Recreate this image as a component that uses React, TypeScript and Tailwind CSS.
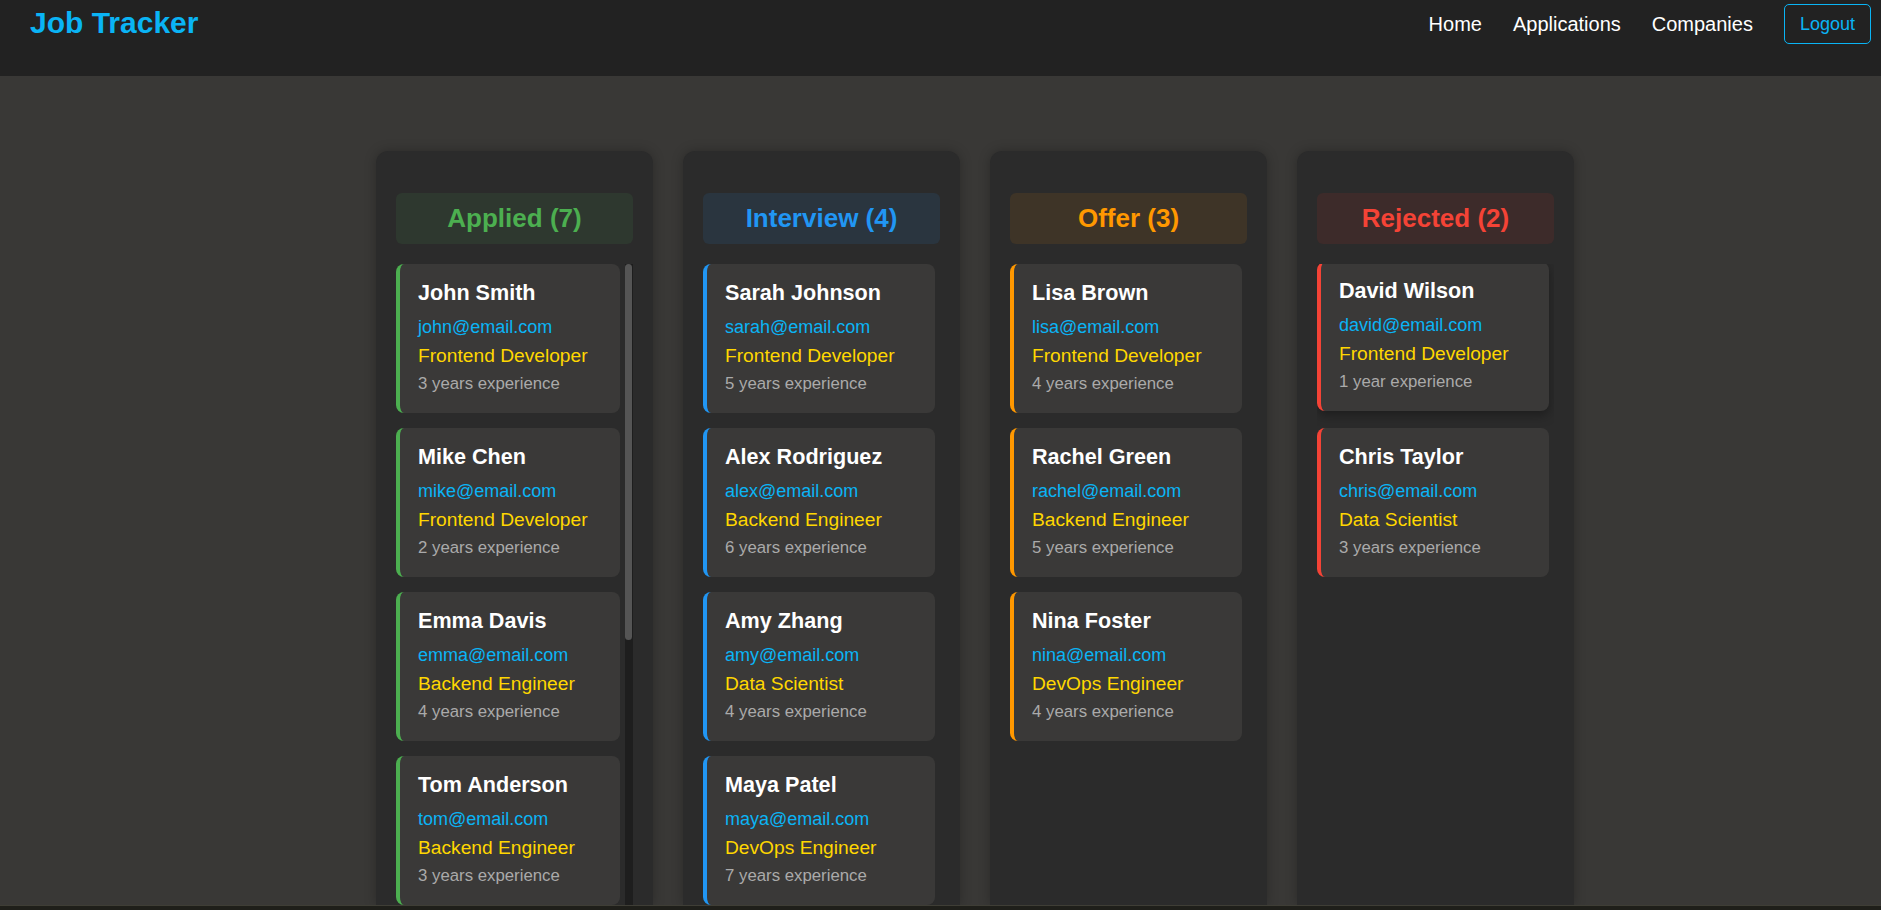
import React from 'react';

type Candidate = {
  name: string;
  email: string;
  role: string;
  exp: string;
};

type Column = {
  title: string;
  text: string;
  head: string;
  border: string;
  scroll?: boolean;
  items: Candidate[];
};

const columns: Column[] = [
  {
    title: 'Applied (7)',
    text: 'text-[#4caf50]',
    head: 'bg-[#2e382f]',
    border: 'border-[#4caf50]',
    scroll: true,
    items: [
      { name: 'John Smith', email: 'john@email.com', role: 'Frontend Developer', exp: '3 years experience' },
      { name: 'Mike Chen', email: 'mike@email.com', role: 'Frontend Developer', exp: '2 years experience' },
      { name: 'Emma Davis', email: 'emma@email.com', role: 'Backend Engineer', exp: '4 years experience' },
      { name: 'Tom Anderson', email: 'tom@email.com', role: 'Backend Engineer', exp: '3 years experience' },
      { name: 'Olivia Martin', email: 'olivia@email.com', role: 'Data Scientist', exp: '2 years experience' },
      { name: 'James Lee', email: 'james@email.com', role: 'DevOps Engineer', exp: '5 years experience' },
      { name: 'Sophie Clark', email: 'sophie@email.com', role: 'Frontend Developer', exp: '1 year experience' },
    ],
  },
  {
    title: 'Interview (4)',
    text: 'text-[#2196f3]',
    head: 'bg-[#2a353f]',
    border: 'border-[#2196f3]',
    items: [
      { name: 'Sarah Johnson', email: 'sarah@email.com', role: 'Frontend Developer', exp: '5 years experience' },
      { name: 'Alex Rodriguez', email: 'alex@email.com', role: 'Backend Engineer', exp: '6 years experience' },
      { name: 'Amy Zhang', email: 'amy@email.com', role: 'Data Scientist', exp: '4 years experience' },
      { name: 'Maya Patel', email: 'maya@email.com', role: 'DevOps Engineer', exp: '7 years experience' },
    ],
  },
  {
    title: 'Offer (3)',
    text: 'text-[#ff9800]',
    head: 'bg-[#3e3427]',
    border: 'border-[#ff9800]',
    items: [
      { name: 'Lisa Brown', email: 'lisa@email.com', role: 'Frontend Developer', exp: '4 years experience' },
      { name: 'Rachel Green', email: 'rachel@email.com', role: 'Backend Engineer', exp: '5 years experience' },
      { name: 'Nina Foster', email: 'nina@email.com', role: 'DevOps Engineer', exp: '4 years experience' },
    ],
  },
  {
    title: 'Rejected (2)',
    text: 'text-[#f44336]',
    head: 'bg-[#3d2b2a]',
    border: 'border-[#f44336]',
    items: [
      { name: 'David Wilson', email: 'david@email.com', role: 'Frontend Developer', exp: '1 year experience' },
      { name: 'Chris Taylor', email: 'chris@email.com', role: 'Data Scientist', exp: '3 years experience' },
    ],
  },
];

function Card({ c, border, hovered }: { c: Candidate; border: string; hovered?: boolean }) {
  return (
    <div
      className={`shrink-0 bg-[#3a3938] rounded-[8px] border-l-4 ${border} pl-[18px] pr-3 pt-4 pb-[18px] ${
        hovered ? '-translate-y-[2px] shadow-[0_4px_12px_rgba(0,0,0,0.35)]' : ''
      }`}
    >
      <h3 className="text-white font-bold text-[21.6px] leading-[26px] mb-[9px]">{c.name}</h3>
      <p className="text-[#0ab4f5] text-[18px] leading-[24px] mb-[5px]">{c.email}</p>
      <p className="text-[#ffd700] text-[19.2px] leading-[24px] mb-[5px]">{c.role}</p>
      <p className="text-[#aaaaaa] text-[16.8px] leading-[22px]">{c.exp}</p>
    </div>
  );
}

export default function App() {
  return (
    <div className="min-h-screen bg-[#393836] font-['Liberation_Sans',Arial,sans-serif] flex flex-col">
      {/* Top bar */}
      <header className="h-[76px] bg-[#222222] flex items-start justify-between pl-[30px] pr-[10px]">
        <h1 className="mt-[6px] text-[30px] leading-[34px] font-bold text-[#0ab4f5]">Job Tracker</h1>
        <nav className="mt-1 flex items-center gap-[31px]">
          <a className="text-white text-[20px] leading-[23px]">Home</a>
          <a className="text-white text-[20px] leading-[23px]">Applications</a>
          <a className="text-white text-[20px] leading-[23px]">Companies</a>
          <button className="h-10 px-[15px] border border-[#0ab4f5] rounded-[5px] text-[#0ab4f5] text-[18px]">
            Logout
          </button>
        </nav>
      </header>

      {/* Board */}
      <main className="pt-[75px] pl-[69px] flex justify-center gap-[30px]">
        {columns.map((col, ci) => (
          <section
            key={col.title}
            className="w-[277px] h-[754px] bg-[#2b2b2b] rounded-t-[12px] shadow-[0_0_12px_rgba(0,0,0,0.25)] pt-[42px] px-5 flex flex-col"
          >
            <h2
              className={`h-[51px] shrink-0 rounded-[6px] ${col.head} ${col.text} text-[26px] font-bold flex items-center justify-center mb-5`}
            >
              {col.title}
            </h2>
            <div className="flex-1 min-h-0 flex">
              <div className="flex-1 min-w-0 overflow-hidden flex flex-col gap-[15px] pr-[5px]">
                {col.items.map((c, i) => (
                  <Card key={c.email} c={c} border={col.border} hovered={ci === 3 && i === 0} />
                ))}
              </div>
              {col.scroll && (
                <div className="w-[8px] shrink-0 bg-[#1e1e1e]">
                  <div className="h-[376px] w-[7px] rounded-[4px] bg-[#555555]" />
                </div>
              )}
            </div>
          </section>
        ))}
      </main>

      <div className="h-[5px] bg-[#1f1f1a] border-t border-[#3f3e36]" />
    </div>
  );
}
